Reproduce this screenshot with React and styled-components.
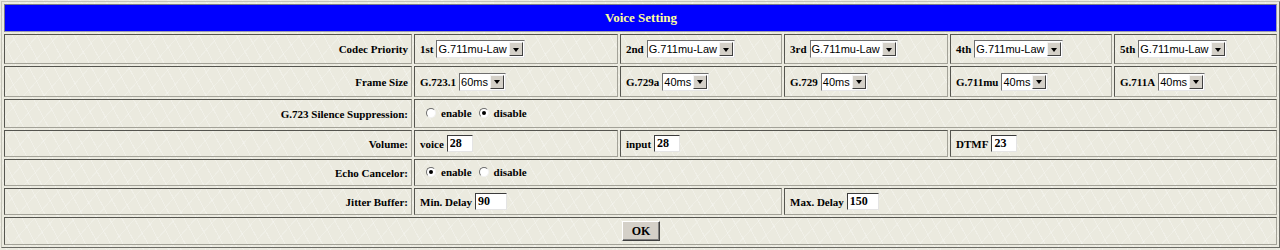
import React from 'react';
import styled, { createGlobalStyle } from 'styled-components';

const Global = createGlobalStyle`
  html, body {
    margin: 0;
    padding: 0;
    background-color: #ebeadf;
    background-image:
      repeating-linear-gradient(62deg, rgba(255,255,255,0.28) 0 1px, transparent 1px 11px),
      repeating-linear-gradient(-48deg, rgba(255,255,255,0.22) 0 1px, transparent 1px 15px);
  }
  body {
    font-family: "Liberation Serif", "Times New Roman", serif;
  }
`;

const Table = styled.table`
  margin: 1px 0 0 1px;
  width: 1279px;
  table-layout: fixed;
  border-collapse: separate;
  border-spacing: 2px;
  border: 1px solid;
  border-color: #c4c3b8 #6a6a64 #6a6a64 #c4c3b8;
`;

const Row = styled.tr`
  height: ${(p) => p.$h}px;
`;

const Cell = styled.td`
  box-sizing: border-box;
  border: 1px solid;
  border-color: #55554f #a3a298 #a3a298 #55554f;
  padding: 0 4px 0 5px;
  font-size: 11px;
  font-weight: bold;
  color: #000;
  text-align: left;
  vertical-align: middle;
  white-space: nowrap;
  overflow: hidden;
`;

const LabelCell = styled(Cell)`
  text-align: right;
  padding-right: 3px;
`;

const HeaderCell = styled(Cell)`
  background: #0000ff;
  color: #ffff9c;
  font-size: 13px;
  text-align: center;
  border-color: #7a7a8a #9a9ab0 #9a9ab0 #7a7a8a;
`;

const CenterCell = styled(Cell)`
  text-align: center;
`;

const Caption = styled.span`
  margin-right: 3px;
  vertical-align: middle;
`;

const SelectBox = styled.span`
  display: inline-flex;
  align-items: stretch;
  box-sizing: border-box;
  height: 18px;
  vertical-align: middle;
  background: #fff;
  border: 1px solid;
  border-color: #6f6f6f #e6e6e6 #e6e6e6 #6f6f6f;
  font-family: "Liberation Sans", Arial, sans-serif;
  font-weight: normal;
  font-size: 11px;
  color: #000;
`;

const SelectText = styled.span`
  display: flex;
  align-items: center;
  padding: 0 1px;
`;

const ArrowButton = styled.span`
  display: flex;
  align-items: center;
  justify-content: center;
  box-sizing: border-box;
  width: 14px;
  margin: 1px;
  background: #d4d0c8;
  border: 1px solid;
  border-color: #f4f4f4 #404040 #404040 #f4f4f4;
  &::after {
    content: "";
    width: 0;
    height: 0;
    border-left: 3px solid transparent;
    border-right: 3px solid transparent;
    border-top: 4px solid #000;
    margin-top: 1px;
  }
`;

const TextInput = styled.input`
  box-sizing: border-box;
  width: ${(p) => p.$w}px;
  height: 17px;
  padding: 0 2px;
  vertical-align: middle;
  background: #fff;
  border: 1px solid;
  border-color: #3c3c3c #e4e4e4 #e4e4e4 #3c3c3c;
  font-family: "Liberation Serif", "Times New Roman", serif;
  font-weight: bold;
  font-size: 12px;
  color: #000;
  outline: none;
`;

const RadioGroup = styled.span`
  display: inline-flex;
  align-items: center;
  gap: 7px;
  padding-left: 6px;
`;

const RadioLabel = styled.span`
  display: inline-flex;
  align-items: center;
  gap: 5px;
`;

const RadioDot = styled.span`
  position: relative;
  display: inline-block;
  box-sizing: border-box;
  width: 10px;
  height: 10px;
  border-radius: 50%;
  background: #fff;
  border: 1px solid;
  border-color: #6c6c6c #f2f2f2 #f2f2f2 #6c6c6c;
  &::after {
    content: "";
    display: ${(p) => (p.$checked ? 'block' : 'none')};
    position: absolute;
    left: 2px;
    top: 2px;
    width: 4px;
    height: 4px;
    border-radius: 50%;
    background: #000;
  }
`;

const OkButton = styled.button`
  box-sizing: border-box;
  width: 38px;
  height: 20px;
  padding: 0;
  background: #d4d0c8;
  border: 1px solid;
  border-color: #ffffff #404040 #404040 #ffffff;
  box-shadow: inset -1px -1px 0 #808080;
  font-family: "Liberation Serif", "Times New Roman", serif;
  font-weight: bold;
  font-size: 12px;
  color: #000;
`;

function FakeSelect({ value }) {
  return (
    <SelectBox>
      <SelectText>{value}</SelectText>
      <ArrowButton />
    </SelectBox>
  );
}

function Radio({ checked, children }) {
  return (
    <RadioLabel>
      <RadioDot $checked={checked} />
      {children}
    </RadioLabel>
  );
}

const priorities = ['1st', '2nd', '3rd', '4th', '5th'];
const frames = [
  ['G.723.1', '60ms'],
  ['G.729a', '40ms'],
  ['G.729', '40ms'],
  ['G.711mu', '40ms'],
  ['G.711A', '40ms'],
];

export default function App() {
  return (
    <>
      <Global />
      <Table>
        <colgroup>
          <col style={{ width: 408 }} />
          <col style={{ width: 204 }} />
          <col style={{ width: 162 }} />
          <col style={{ width: 164 }} />
          <col style={{ width: 162 }} />
          <col style={{ width: 163 }} />
        </colgroup>
        <tbody>
          <Row $h={28}>
            <HeaderCell colSpan={6}>Voice Setting</HeaderCell>
          </Row>
          <Row $h={30}>
            <LabelCell>Codec Priority</LabelCell>
            {priorities.map((p) => (
              <Cell key={p}>
                <Caption>{p}</Caption>
                <FakeSelect value="G.711mu-Law" />
              </Cell>
            ))}
          </Row>
          <Row $h={31}>
            <LabelCell>Frame Size</LabelCell>
            {frames.map(([c, v]) => (
              <Cell key={c}>
                <Caption>{c}</Caption>
                <FakeSelect value={v} />
              </Cell>
            ))}
          </Row>
          <Row $h={29}>
            <LabelCell>G.723 Silence Suppression:</LabelCell>
            <Cell colSpan={5}>
              <RadioGroup>
                <Radio>enable</Radio>
                <Radio checked>disable</Radio>
              </RadioGroup>
            </Cell>
          </Row>
          <Row $h={27}>
            <LabelCell>Volume:</LabelCell>
            <Cell>
              <Caption>voice</Caption>
              <TextInput $w={26} defaultValue="28" />
            </Cell>
            <Cell colSpan={2}>
              <Caption>input</Caption>
              <TextInput $w={26} defaultValue="28" />
            </Cell>
            <Cell colSpan={2}>
              <Caption>DTMF</Caption>
              <TextInput $w={26} defaultValue="23" />
            </Cell>
          </Row>
          <Row $h={27}>
            <LabelCell>Echo Cancelor:</LabelCell>
            <Cell colSpan={5}>
              <RadioGroup>
                <Radio checked>enable</Radio>
                <Radio>disable</Radio>
              </RadioGroup>
            </Cell>
          </Row>
          <Row $h={27}>
            <LabelCell>Jitter Buffer:</LabelCell>
            <Cell colSpan={2}>
              <Caption>Min. Delay</Caption>
              <TextInput $w={32} defaultValue="90" />
            </Cell>
            <Cell colSpan={3}>
              <Caption>Max. Delay</Caption>
              <TextInput $w={32} defaultValue="150" />
            </Cell>
          </Row>
          <Row $h={28}>
            <CenterCell colSpan={6}>
              <OkButton>OK</OkButton>
            </CenterCell>
          </Row>
        </tbody>
      </Table>
    </>
  );
}
